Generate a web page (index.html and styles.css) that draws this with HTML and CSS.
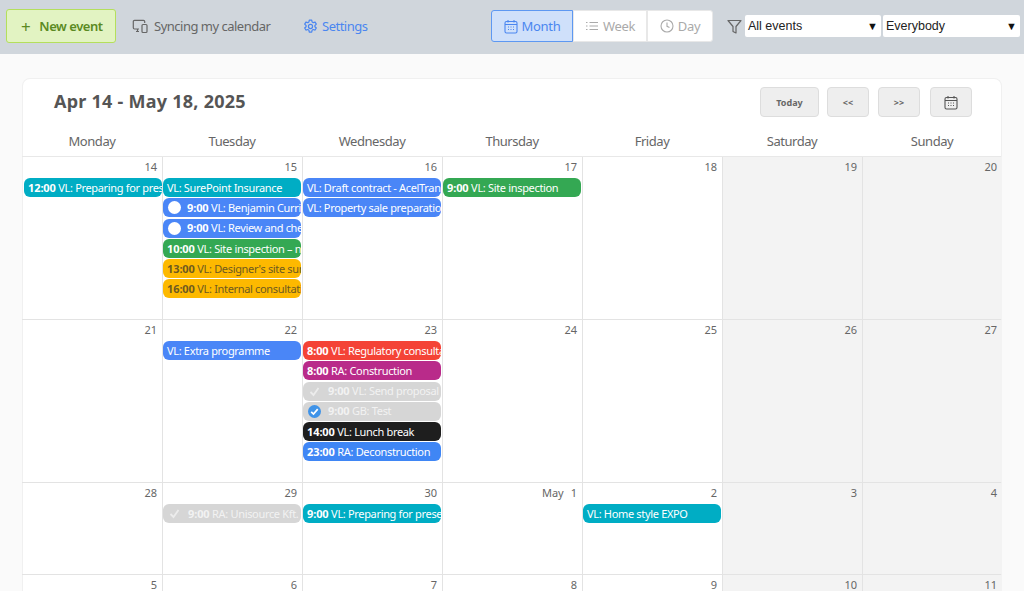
FILE: index.html
```html
<!DOCTYPE html>
<html>
<head>
    <title>Calendar</title>
    <meta charset="utf-8">
    <link rel="stylesheet" href="styles.css">
</head>
<body>
    <div class="toolbar">
        <div class="newEvent"><span class="plus">+</span>New event</div>
        <div class="link sync">
            <svg width="16" height="16" viewBox="0 0 16 16" fill="none" stroke="currentColor" stroke-width="1.2"><path d="M7 11H2.5A1.2 1.2 0 0 1 1.3 9.8V3.5A1.2 1.2 0 0 1 2.5 2.3h9A1.2 1.2 0 0 1 12.7 3.5V5"/><path d="M4 13.5h3M5.5 11v2.5"/><rect x="10" y="6.5" width="5" height="8" rx="1"/></svg>
            Syncing my calendar
        </div>
        <div class="link settings">
            <svg width="15" height="15" viewBox="0 0 16 16" fill="none" stroke="currentColor" stroke-width="1.3"><path d="M6.7 1.2h2.6l.4 2 1.2.7 2-.6 1.3 2.2-1.5 1.4v1.3l1.5 1.4-1.3 2.2-2-.6-1.2.7-.4 2H6.7l-.4-2-1.2-.7-2 .6-1.3-2.2 1.5-1.4V6.900L1.800 5.500l1.300-2.200 2 .6 1.200-.7z" stroke-linejoin="round"/><circle cx="8" cy="8" r="2.200"/></svg>
            Settings
        </div>
        <div class="views">
            <div class="view active">
                <svg width="14" height="15" viewBox="0 0 14 15" fill="none" stroke="currentColor" stroke-width="1.1"><rect x="1" y="2.500" width="12" height="11.500" rx="1.500"/><path d="M1 5.500h12M4 1v2.500M10 1v2.500"/><path d="M4 8h1M6.500 8h1M9 8h1M4 10.500h1M6.500 10.500h1M9 10.500h1"/></svg>
                Month
            </div>
            <div class="view">
                <svg width="14" height="12" viewBox="0 0 14 12" fill="none" stroke="currentColor" stroke-width="1"><path d="M1 2.500h1.500M4.500 2.500H13M1 6h1.500M4.500 6H13M1 9.500h1.500M4.500 9.500H13"/></svg>
                Week
            </div>
            <div class="view">
                <svg width="14" height="14" viewBox="0 0 14 14" fill="none" stroke="currentColor" stroke-width="1.100"><circle cx="7" cy="7" r="6"/><path d="M7 3.500V7.300L9.500 8.500"/></svg>
                Day
            </div>
        </div>
        <svg class="filter" width="15" height="15" viewBox="0 0 15 15" fill="none" stroke="#666" stroke-width="1.200" stroke-linejoin="round"><path d="M1 1.500h13L9 7.500v6.500L6 12.500v-5z"/></svg>
        <div class="select first">All events<span>▼</span></div>
        <div class="select">Everybody<span>▼</span></div>
    </div>

    <div class="card">
        <div class="head">
            <h1>Apr 14 - May 18, 2025</h1>
            <div class="navBtn today">Today</div>
            <div class="navBtn prev">&lt;&lt;</div>
            <div class="navBtn next">&gt;&gt;</div>
            <div class="navBtn cal">
                <svg width="14" height="15" viewBox="0 0 14 15" fill="none" stroke="#555" stroke-width="1.100"><rect x="1" y="2.500" width="12" height="11.500" rx="1.500"/><path d="M1 5.500h12M4 1v2.500M10 1v2.500"/><path d="M4 8h1M6.500 8h1M9 8h1M4 10.500h1M6.500 10.500h1M9 10.500h1"/></svg>
            </div>
        </div>
        <div class="weekdays">
            <div>Monday</div><div>Tuesday</div><div>Wednesday</div><div>Thursday</div><div>Friday</div><div>Saturday</div><div>Sunday</div>
        </div>
        <div class="week tall">
            <div class="day"><div class="num">14</div>
                <div class="ev teal"><b>12:00</b> VL: Preparing for presentation</div>
            </div>
            <div class="day"><div class="num">15</div>
                <div class="ev teal">VL: SurePoint Insurance</div>
                <div class="ev blue task"><i class="circle"></i><b>9:00</b> VL: Benjamin Currie call</div>
                <div class="ev blue task"><i class="circle"></i><b>9:00</b> VL: Review and check</div>
                <div class="ev green"><b>10:00</b> VL: Site inspection – new</div>
                <div class="ev amber"><b>13:00</b> VL: Designer's site survey</div>
                <div class="ev amber"><b>16:00</b> VL: Internal consultation</div>
            </div>
            <div class="day"><div class="num">16</div>
                <div class="ev blue">VL: Draft contract - AcelTrans Ltd.</div>
                <div class="ev blue">VL: Property sale preparation</div>
            </div>
            <div class="day"><div class="num">17</div>
                <div class="ev green"><b>9:00</b> VL: Site inspection</div>
            </div>
            <div class="day"><div class="num">18</div></div>
            <div class="day off"><div class="num">19</div></div>
            <div class="day off"><div class="num">20</div></div>
        </div>
        <div class="week tall">
            <div class="day"><div class="num">21</div></div>
            <div class="day"><div class="num">22</div>
                <div class="ev blue">VL: Extra programme</div>
            </div>
            <div class="day"><div class="num">23</div>
                <div class="ev red"><b>8:00</b> VL: Regulatory consultation</div>
                <div class="ev magenta"><b>8:00</b> RA: Construction</div>
                <div class="ev done task">
                    <svg class="tick" width="13" height="13" viewBox="0 0 13 13" fill="none" stroke="#ececec" stroke-width="1.800"><path d="M2.500 7l3 3 5-7"/></svg>
                    <b>9:00</b> VL: Send proposal to client</div>
                <div class="ev done task">
                    <svg class="tick" width="13" height="13" viewBox="0 0 13 13"><circle cx="6.500" cy="6.500" r="6.500" fill="#3f93e8"/><path d="M3.200 6.800l2.300 2.300 4.200-5" fill="none" stroke="#fff" stroke-width="1.700"/></svg>
                    <b>9:00</b> GB: Test</div>
                <div class="ev black"><b>14:00</b> VL: Lunch break</div>
                <div class="ev blue2"><b>23:00</b> RA: Deconstruction</div>
            </div>
            <div class="day"><div class="num">24</div></div>
            <div class="day"><div class="num">25</div></div>
            <div class="day off"><div class="num">26</div></div>
            <div class="day off"><div class="num">27</div></div>
        </div>
        <div class="week short">
            <div class="day"><div class="num">28</div></div>
            <div class="day"><div class="num">29</div>
                <div class="ev done task">
                    <svg class="tick" width="13" height="13" viewBox="0 0 13 13" fill="none" stroke="#ececec" stroke-width="1.800"><path d="M2.500 7l3 3 5-7"/></svg>
                    <b>9:00</b> RA: Unisource Kft.</div>
            </div>
            <div class="day"><div class="num">30</div>
                <div class="ev teal"><b>9:00</b> VL: Preparing for presentation</div>
            </div>
            <div class="day"><div class="num"><span class="month">May</span>1</div></div>
            <div class="day"><div class="num">2</div>
                <div class="ev teal">VL: Home style EXPO</div>
            </div>
            <div class="day off"><div class="num">3</div></div>
            <div class="day off"><div class="num">4</div></div>
        </div>
        <div class="week short">
            <div class="day"><div class="num">5</div></div>
            <div class="day"><div class="num">6</div></div>
            <div class="day"><div class="num">7</div></div>
            <div class="day"><div class="num">8</div></div>
            <div class="day"><div class="num">9</div></div>
            <div class="day off"><div class="num">10</div></div>
            <div class="day off"><div class="num">11</div></div>
        </div>
    </div>
</body>
</html>
```

FILE: styles.css
```css
html, body{
    height: 591px;
    overflow: hidden;
}
body{
    margin: 0;
    background: #fafafa;
    font-family: "Noto Sans", "Open Sans", sans-serif;
    font-size: 12px;
    color: #666;
}
.toolbar{
    height: 54px;
    box-sizing: border-box;
    background: #d0d6dc;
    padding: 0 0 2px 6px;
    display: flex;
    align-items: center;
}
.newEvent{
    width: 110px;
    height: 34px;
    box-sizing: border-box;
    border: 1px solid #b4df5c;
    border-radius: 3px;
    background: #e2f3c2;
    color: #5b8a22;
    font-size: 13px;
    font-weight: 600;
    display: flex;
    align-items: center;
    padding-left: 14px;
    letter-spacing: -0.45px;
}
.plus{
    font-size: 17px;
    font-weight: 400;
    margin-right: 9px;
    line-height: 1;
}
.link{
    display: flex;
    align-items: center;
    gap: 6px;
    font-size: 13px;
    letter-spacing: -0.5px;
}
.sync{
    color: #666;
    margin-left: 16px;
    width: 171px;
}
.settings{
    color: #4a86f0;
    gap: 4px;
    width: 188px;
}
.views{
    display: flex;
    height: 32px;
}
.view{
    box-sizing: border-box;
    height: 32px;
    background: #fff;
    border: 1px solid #e8e8e8;
    color: #aaa;
    font-size: 13px;
    letter-spacing: -0.3px;
    display: flex;
    align-items: center;
    justify-content: center;
    gap: 4px;
    width: 74px;
}
.view:last-child{
    width: 66px;
    border-radius: 0 3px 3px 0;
}
.view.active{
    width: 82px;
    background: #cfe0fa;
    border-color: #5d98f2;
    color: #4a86f0;
    border-radius: 3px 0 0 3px;
}
.filter{
    margin-left: 14px;
    margin-right: 3px;
}
.select{
    width: 137px;
    height: 22px;
    box-sizing: border-box;
    background: #fff;
    border-radius: 2px;
    font-family: "Liberation Sans", sans-serif;
    font-size: 12.5px;
    color: #222;
    display: flex;
    align-items: center;
    justify-content: space-between;
    padding: 0 3px;
}
.select.first{
    width: 136px;
    margin-right: 2px;
}
.select span{
    font-size: 11px;
    color: #111;
}
.card{
    margin: 24px 22px 0;
    width: 980px;
    box-sizing: border-box;
    background: #fff;
    border: 1px solid #f0f0f0;
    border-bottom: 0;
    border-radius: 8px 8px 0 0;
}
.head{
    display: flex;
    align-items: flex-start;
    height: 50px;
}
.head h1{
    margin: 10px auto 0 31px;
    font-size: 18px;
    line-height: 24px;
    font-weight: 700;
    letter-spacing: 0.25px;
    color: #555;
}
.navBtn{
    box-sizing: border-box;
    height: 30px;
    margin-top: 8px;
    background: #eee;
    border: 1px solid #ddd;
    border-radius: 4px;
    font-size: 9px;
    font-weight: 700;
    color: #666;
    display: flex;
    align-items: center;
    justify-content: center;
}
.today{
    width: 59px;
}
.prev{
    width: 42px;
    margin-left: 8px;
}
.next{
    width: 42px;
    margin-left: 9px;
}
.cal{
    width: 42px;
    margin-left: 10px;
    margin-right: 29px;
}
.weekdays{
    display: grid;
    grid-template-columns: repeat(7, 140px);
    height: 27px;
    border-bottom: 1px solid #e8e8e8;
    margin-left: -1px;
}
.weekdays > div{
    text-align: center;
    font-size: 13px;
    line-height: 24px;
    letter-spacing: -0.45px;
}
.week{
    display: grid;
    grid-template-columns: repeat(7, 140px);
    margin-left: -1px;
    border-bottom: 1px solid #e3e3e3;
}
.week.tall{
    height: 162px;
}
.week.short{
    height: 91px;
}
.day{
    box-sizing: border-box;
    border-left: 1px solid #e3e3e3;
    overflow: hidden;
}
.day:first-child{
    border-left-color: transparent;
    padding-left: 1px;
}
.day.off{
    background: #f3f3f3;
}
.num{
    height: 21px;
    line-height: 20px;
    text-align: right;
    padding-right: 5px;
    font-size: 11px;
    color: #666;
}
.month{
    margin-right: 7px;
}
.ev{
    box-sizing: border-box;
    width: 138px;
    height: 19px;
    line-height: 20px;
    margin-bottom: 1.300px;
    padding-left: 4px;
    border-radius: 6px;
    color: #fff;
    font-size: 11px;
    white-space: nowrap;
    overflow: hidden;
    letter-spacing: -0.33px;
}
.ev b{
    font-weight: 700;
    letter-spacing: -0.1px;
}
.ev.task{
    display: flex;
    align-items: center;
    white-space: pre;
}
.circle{
    width: 13px;
    height: 13px;
    flex: none;
    border-radius: 50%;
    background: #fff;
    margin: 0 6px 0 1px;
}
.tick{
    flex: none;
    margin: 0 7px 0 1px;
}
.teal{ background: #00adc4; }
.blue{ background: #4a86f7; }
.blue2{ background: #3f86f5; }
.green{ background: #34a853; }
.amber{ background: #fdb900; color: #6e5a20; }
.red{ background: #f44336; }
.magenta{ background: #b92b8a; }
.done{ background: #d6d6d6; color: #f2f2f2; }
.black{ background: #1e1e1e; }
```
